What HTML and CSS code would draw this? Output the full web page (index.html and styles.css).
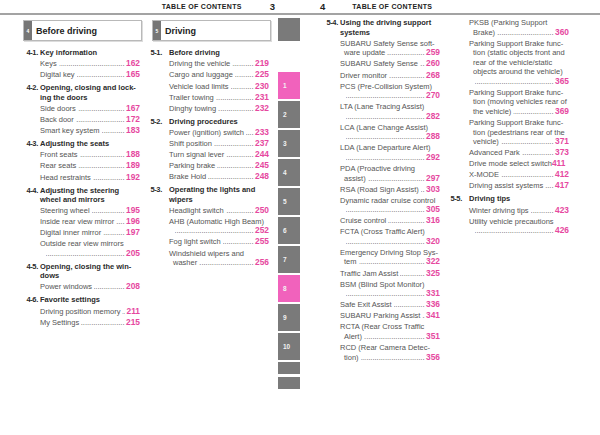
FILE: index.html
```html
<!DOCTYPE html>
<html lang="en">
<head>
<meta charset="utf-8">
<title>Table of Contents</title>
<link rel="stylesheet" href="styles.css">
</head>
<body>
<header class="top">
  <div class="top-half top-l"><span class="toc">TABLE OF CONTENTS</span><span class="pg">3</span></div>
  <div class="top-half top-r"><span class="pg">4</span><span class="toc">TABLE OF CONTENTS</span></div>
</header>
<div class="spread">
  <section class="page page-l">
    <div class="col col1">
      <div class="secbox"><span class="secnum">4</span><span class="sectitle">Before driving</span></div>
      <div class="list">
        <div class="h"><span class="n">4-1.</span><span>Key information</span></div>
        <div class="it row"><span class="t">Keys</span><span class="d"></span><b class="p">162</b></div>
        <div class="it row"><span class="t">Digital key</span><span class="d"></span><b class="p">165</b></div>
        <div class="h"><span class="n">4-2.</span><span>Opening, closing and lock-<br>ing the doors</span></div>
        <div class="it row"><span class="t">Side doors</span><span class="d"></span><b class="p">167</b></div>
        <div class="it row"><span class="t">Back door</span><span class="d"></span><b class="p">172</b></div>
        <div class="it row"><span class="t">Smart key system</span><span class="d"></span><b class="p">183</b></div>
        <div class="h"><span class="n">4-3.</span><span>Adjusting the seats</span></div>
        <div class="it row"><span class="t">Front seats</span><span class="d"></span><b class="p">188</b></div>
        <div class="it row"><span class="t">Rear seats</span><span class="d"></span><b class="p">189</b></div>
        <div class="it row"><span class="t">Head restraints</span><span class="d"></span><b class="p">192</b></div>
        <div class="h"><span class="n">4-4.</span><span>Adjusting the steering<br>wheel and mirrors</span></div>
        <div class="it row"><span class="t">Steering wheel</span><span class="d"></span><b class="p">195</b></div>
        <div class="it row"><span class="t">Inside rear view mirror</span><span class="d"></span><b class="p">196</b></div>
        <div class="it row"><span class="t">Digital inner mirror</span><span class="d"></span><b class="p">197</b></div>
        <div class="it"><div class="ln">Outside rear view mirrors</div><div class="row in"><span class="d"></span><b class="p">205</b></div></div>
        <div class="h"><span class="n">4-5.</span><span>Opening, closing the win-<br>dows</span></div>
        <div class="it row"><span class="t">Power windows</span><span class="d"></span><b class="p">208</b></div>
        <div class="h"><span class="n">4-6.</span><span>Favorite settings</span></div>
        <div class="it row"><span class="t">Driving position memory</span><span class="d"></span><b class="p">211</b></div>
        <div class="it row"><span class="t">My Settings</span><span class="d"></span><b class="p">215</b></div>
      </div>
    </div>
    <div class="col col2">
      <div class="secbox"><span class="secnum">5</span><span class="sectitle">Driving</span></div>
      <div class="list">
        <div class="h"><span class="n">5-1.</span><span>Before driving</span></div>
        <div class="it row"><span class="t">Driving the vehicle</span><span class="d"></span><b class="p">219</b></div>
        <div class="it row"><span class="t">Cargo and luggage</span><span class="d"></span><b class="p">225</b></div>
        <div class="it row"><span class="t">Vehicle load limits</span><span class="d"></span><b class="p">230</b></div>
        <div class="it row"><span class="t">Trailer towing</span><span class="d"></span><b class="p">231</b></div>
        <div class="it row"><span class="t">Dinghy towing</span><span class="d"></span><b class="p">232</b></div>
        <div class="h"><span class="n">5-2.</span><span>Driving procedures</span></div>
        <div class="it row"><span class="t">Power (ignition) switch</span><span class="d"></span><b class="p">233</b></div>
        <div class="it row"><span class="t">Shift position</span><span class="d"></span><b class="p">237</b></div>
        <div class="it row"><span class="t">Turn signal lever</span><span class="d"></span><b class="p">244</b></div>
        <div class="it row"><span class="t">Parking brake</span><span class="d"></span><b class="p">245</b></div>
        <div class="it row"><span class="t">Brake Hold</span><span class="d"></span><b class="p">248</b></div>
        <div class="h"><span class="n">5-3.</span><span>Operating the lights and<br>wipers</span></div>
        <div class="it row"><span class="t">Headlight switch</span><span class="d"></span><b class="p">250</b></div>
        <div class="it"><div class="ln">AHB (Automatic High Beam)</div><div class="row in"><span class="d"></span><b class="p">252</b></div></div>
        <div class="it row"><span class="t">Fog light switch</span><span class="d"></span><b class="p">255</b></div>
        <div class="it"><div class="ln">Windshield wipers and</div><div class="row in"><span class="t">washer</span><span class="d"></span><b class="p">256</b></div></div>
      </div>
    </div>
    <nav class="tabs">
      <div class="tab tab-top"></div>
      <div class="tab tab-n tab-first pink">1</div>
      <div class="tab tab-n">2</div>
      <div class="tab tab-n">3</div>
      <div class="tab tab-n">4</div>
      <div class="tab tab-n">5</div>
      <div class="tab tab-n">6</div>
      <div class="tab tab-n">7</div>
      <div class="tab tab-n pink">8</div>
      <div class="tab tab-n">9</div>
      <div class="tab tab-n">10</div>
      <div class="tab tab-s"></div>
      <div class="tab tab-s tab-s2"></div>
    </nav>
  </section>
  <section class="page page-r">
    <div class="col colA">
      <div class="h"><span class="n">5-4.</span><span>Using the driving support<br>systems</span></div>
      <div class="it"><div class="ln">SUBARU Safety Sense soft-</div><div class="row in"><span class="t">ware update</span><span class="d"></span><b class="p">259</b></div></div>
      <div class="it row"><span class="t">SUBARU Safety Sense</span><span class="d"></span><b class="p">260</b></div>
      <div class="it row"><span class="t">Driver monitor</span><span class="d"></span><b class="p">268</b></div>
      <div class="it"><div class="ln">PCS (Pre-Collision System)</div><div class="row in"><span class="d"></span><b class="p">270</b></div></div>
      <div class="it"><div class="ln">LTA (Lane Tracing Assist)</div><div class="row in"><span class="d"></span><b class="p">282</b></div></div>
      <div class="it"><div class="ln">LCA (Lane Change Assist)</div><div class="row in"><span class="d"></span><b class="p">288</b></div></div>
      <div class="it"><div class="ln">LDA (Lane Departure Alert)</div><div class="row in"><span class="d"></span><b class="p">292</b></div></div>
      <div class="it"><div class="ln">PDA (Proactive driving</div><div class="row in"><span class="t">assist)</span><span class="d"></span><b class="p">297</b></div></div>
      <div class="it row"><span class="t">RSA (Road Sign Assist)</span><span class="d"></span><b class="p">303</b></div>
      <div class="it"><div class="ln">Dynamic radar cruise control</div><div class="row in"><span class="d"></span><b class="p">305</b></div></div>
      <div class="it row"><span class="t">Cruise control</span><span class="d"></span><b class="p">316</b></div>
      <div class="it"><div class="ln">FCTA (Cross Traffic Alert)</div><div class="row in"><span class="d"></span><b class="p">320</b></div></div>
      <div class="it"><div class="ln">Emergency Driving Stop Sys-</div><div class="row in"><span class="t">tem</span><span class="d"></span><b class="p">322</b></div></div>
      <div class="it row"><span class="t">Traffic Jam Assist</span><span class="d"></span><b class="p">325</b></div>
      <div class="it"><div class="ln">BSM (Blind Spot Monitor)</div><div class="row in"><span class="d"></span><b class="p">331</b></div></div>
      <div class="it row"><span class="t">Safe Exit Assist</span><span class="d"></span><b class="p">336</b></div>
      <div class="it row"><span class="t">SUBARU Parking Assist</span><span class="d"></span><b class="p">341</b></div>
      <div class="it"><div class="ln">RCTA (Rear Cross Traffic</div><div class="row in"><span class="t">Alert)</span><span class="d"></span><b class="p">351</b></div></div>
      <div class="it"><div class="ln">RCD (Rear Camera Detec-</div><div class="row in"><span class="t">tion)</span><span class="d"></span><b class="p">356</b></div></div>
    </div>
    <div class="col colB">
      <div class="it"><div class="ln">PKSB (Parking Support</div><div class="row in"><span class="t">Brake)</span><span class="d"></span><b class="p">360</b></div></div>
      <div class="it"><div class="ln">Parking Support Brake func-</div><div class="ln in">tion (static objects front and</div><div class="ln in">rear of the vehicle/static</div><div class="ln in">objects around the vehicle)</div><div class="row in"><span class="d"></span><b class="p">365</b></div></div>
      <div class="it"><div class="ln">Parking Support Brake func-</div><div class="ln in">tion (moving vehicles rear of</div><div class="row in"><span class="t">the vehicle)</span><span class="d"></span><b class="p">369</b></div></div>
      <div class="it"><div class="ln">Parking Support Brake func-</div><div class="ln in">tion (pedestrians rear of the</div><div class="row in"><span class="t">vehicle)</span><span class="d"></span><b class="p">371</b></div></div>
      <div class="it row"><span class="t">Advanced Park</span><span class="d"></span><b class="p">373</b></div>
      <div class="it row"><span class="t">Drive mode select switch</span><b class="p">411</b></div>
      <div class="it row"><span class="t">X-MODE</span><span class="d"></span><b class="p">412</b></div>
      <div class="it row"><span class="t">Driving assist systems</span><span class="d"></span><b class="p">417</b></div>
      <div class="h"><span class="n">5-5.</span><span>Driving tips</span></div>
      <div class="it row"><span class="t">Winter driving tips</span><span class="d"></span><b class="p">423</b></div>
      <div class="it"><div class="ln">Utility vehicle precautions</div><div class="row in"><span class="d"></span><b class="p">426</b></div></div>
    </div>
  </section>
</div>
</body>
</html>
```

FILE: styles.css
```css
* { box-sizing: border-box; margin: 0; padding: 0; }
html, body { background: #fff; }
body {
  margin: 0;
  width: 600px;
  height: 435px;
  overflow: hidden;
  font-family: "Liberation Sans", Arial, sans-serif;
  color: #555;
}

/* running header */
.top {
  display: flex;
  height: 15px;
  border-bottom: 2px solid #a3a3a3;
}
.top-half {
  width: 300px;
  height: 13px;
  display: flex;
  align-items: center;
}
.top-l { justify-content: flex-end; padding-right: 25px; gap: 28px; }
.top-r { padding-left: 20px; gap: 27px; }
.toc {
  font-weight: bold;
  font-size: 7px;
  letter-spacing: 0.3px;
  color: #222;
}
.pg {
  font-weight: bold;
  font-size: 9.5px;
  color: #222;
}

/* spread */
.spread { display: flex; }
.page { width: 300px; display: flex; }
.page-l { padding-left: 23px; }
.page-r { padding-left: 28px; padding-top: 3.25px; gap: 12px; }

.col1 { width: 119px; --n: 12px; }
.col2 { width: 119px; margin-left: 10px; --n: 17px; }
.colA { width: 112px; --n: 12px; }
.colB { width: 117px; --n: 17px; }

/* chapter box */
.secbox {
  margin-top: 5px;
  height: 21px;
  border: 1px solid #b9b9b9;
  box-shadow: 1px 1px 0 #dcdcdc;
  display: flex;
  align-items: center;
  background: #fff;
}
.secnum {
  width: 8px;
  align-self: stretch;
  background: #767676;
  color: #fff;
  font-size: 5px;
  font-weight: bold;
  display: flex;
  align-items: center;
  justify-content: center;
}
.sectitle {
  margin-left: 4px;
  font-weight: bold;
  font-size: 9px;
  color: #222;
}

/* lists */
.list { padding-top: 7.25px; }
.col1 .list { padding-left: 5px; padding-right: 2px; }
.col2 .list { padding-right: 2px; }

.h {
  display: flex;
  font-weight: bold;
  color: #2a2a2a;
  font-size: 7.5px;
  line-height: 9.5px;
  margin-top: 3.5px;
}
.h .n {
  width: calc(var(--n) + 1.5px);
  margin-left: -1.5px;
  flex: none;
  white-space: nowrap;
  letter-spacing: -0.4px;
}

.it {
  margin-left: var(--n);
  margin-top: 1.6px;
  font-size: 7.5px;
  line-height: 9.5px;
}
.list > :first-child,
.colA > :first-child,
.colB > :first-child { margin-top: 0; }

.row { display: flex; align-items: flex-start; }
.t, .ln { white-space: nowrap; }
.in { padding-left: 4px; }
.d {
  flex: 1 1 0;
  min-width: 0;
  overflow: hidden;
  white-space: nowrap;
  direction: rtl;
  margin: 0 1.5px 0 2px;
}
.d::before {
  content: "..................................................................................";
}
.p {
  flex: none;
  font-weight: bold;
  font-size: 8.4px;
  color: #e6489f;
}

/* thumb tabs */
.tabs {
  width: 22px;
  margin-left: 7px;
  display: flex;
  flex-direction: column;
}
.tab {
  background: #7a7a7a;
  color: #f2f2f2;
  font-size: 6.5px;
  font-weight: bold;
  display: flex;
  align-items: center;
  padding-left: 5px;
}
.tab-top { margin-top: 3px; height: 23px; }
.tab-n { height: 27px; margin-top: 2px; }
.tab-first { margin-top: 31px; }
.tab-s { height: 12px; margin-top: 1.5px; }
.tab-s2 { margin-top: 3px; }
.pink { background: #f162bc; }
```
